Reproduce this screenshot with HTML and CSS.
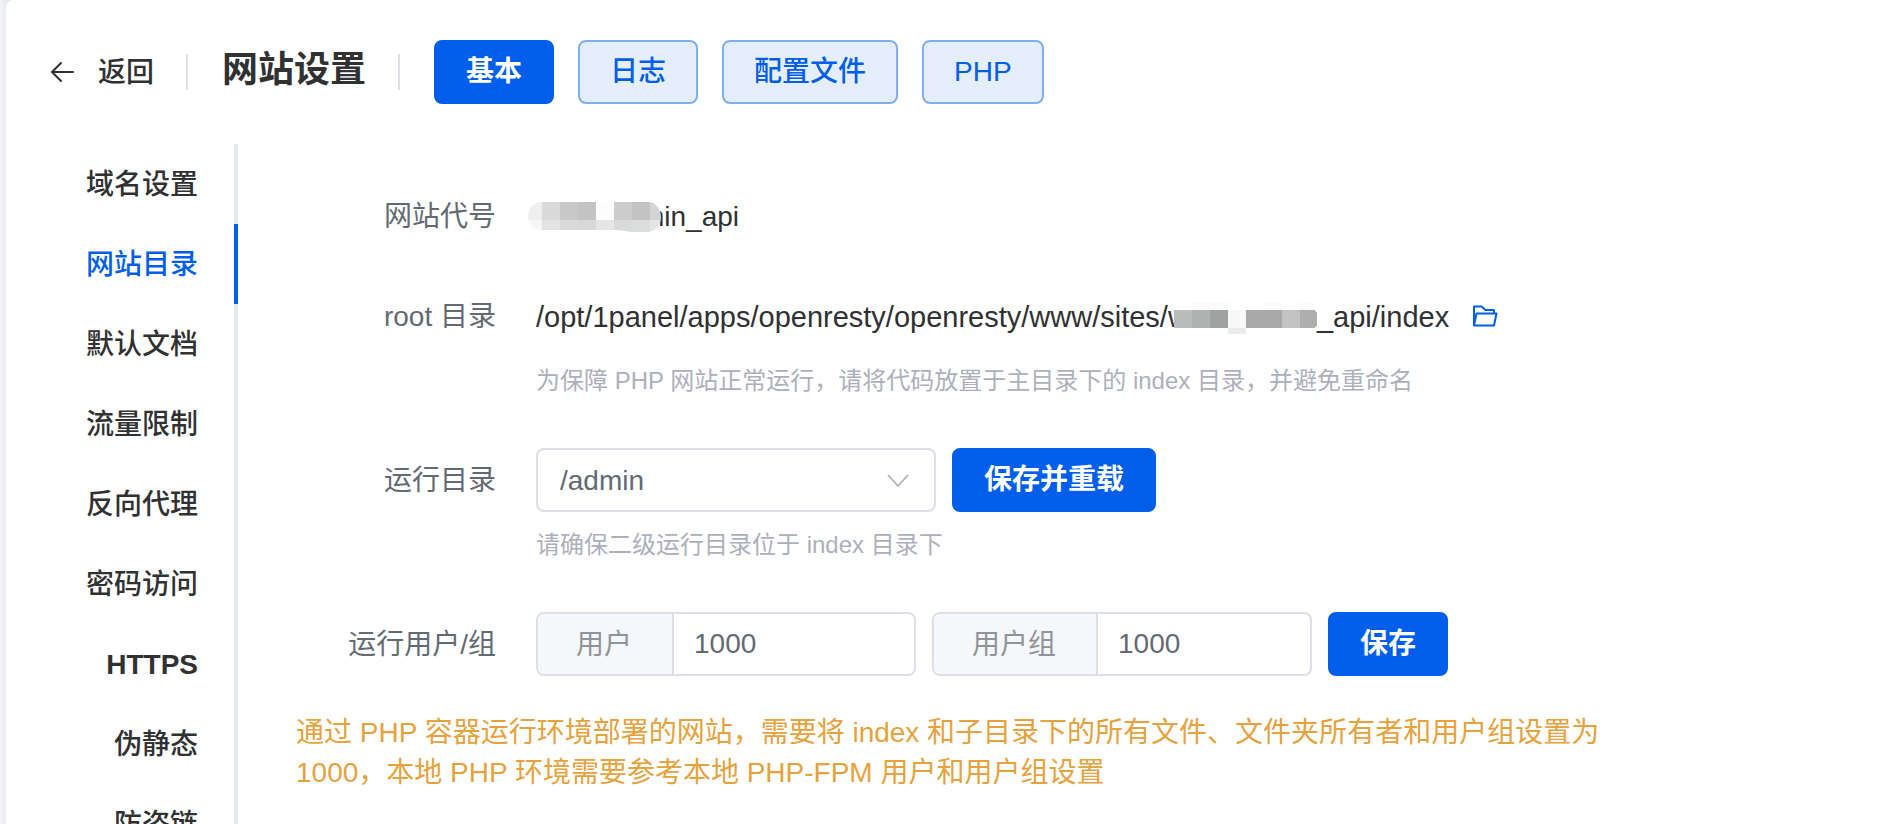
FILE: index.html
```html
<!DOCTYPE html>
<html lang="zh-CN">
<head>
<meta charset="utf-8">
<meta name="viewport" content="width=device-width, initial-scale=1">
<title>网站设置</title>
<link rel="stylesheet" href="styles.css">
</head>
<body>
<div class="card">
  <header class="header">
    <button class="back" type="button">
      <svg class="back-icon" viewBox="0 0 28 28" aria-hidden="true"><path d="M25 14H4M13 5 4 14l9 9"/></svg>
      <span>返回</span>
    </button>
    <span class="divider"></span>
    <h1 class="title">网站设置</h1>
    <span class="divider"></span>
    <nav class="nav">
      <button class="btn btn-primary" type="button">基本</button>
      <button class="btn btn-plain" type="button">日志</button>
      <button class="btn btn-plain" type="button">配置文件</button>
      <button class="btn btn-plain" type="button">PHP</button>
    </nav>
  </header>
  <div class="body">
    <nav class="tabs">
      <a class="tab" href="#domain">域名设置</a>
      <a class="tab tab-active" href="#path">网站目录</a>
      <a class="tab" href="#doc">默认文档</a>
      <a class="tab" href="#limit">流量限制</a>
      <a class="tab" href="#proxy">反向代理</a>
      <a class="tab" href="#auth">密码访问</a>
      <a class="tab tab-latin" href="#https">HTTPS</a>
      <a class="tab" href="#rewrite">伪静态</a>
      <a class="tab" href="#leech">防盗链</a>
    </nav>
    <main class="main">
      <form class="form">
        <div class="row">
          <span class="label">网站代号</span>
          <div class="field">
            <div class="control">
              <span class="value"><span class="masked masked-alias"><svg class="mosaic mosaic-alias" viewBox="0 0 134 30" aria-hidden="true">
                <defs><clipPath id="pill"><path d="M14 0h106a13 15 0 0 1 0 30h-16l-14-2H14a14 14 0 0 1 0-28z"/></clipPath></defs>
                <g clip-path="url(#pill)" shape-rendering="crispEdges">
                  <path fill="#efefef" d="M0 0h14v18H0z"/><path fill="#dadada" d="M14 0h18v18H14z"/><path fill="#c8c8c8" d="M32 0h18v18H32z"/><path fill="#c3c3c3" d="M50 0h18v18H50z"/><path fill="#fdfdfd" d="M68 0h18v18H68z"/><path fill="#cccccc" d="M86 0h18v18H86z"/><path fill="#c3c3c3" d="M104 0h18v18h-18z"/><path fill="#d4d4d4" d="M122 0h12v18h-12z"/>
                  <path fill="#f6f6f6" d="M0 18h14v12H0z"/><path fill="#e2e2e2" d="M14 18h18v12H14z"/><path fill="#d9d9d9" d="M32 18h18v12H32z"/><path fill="#d7d9d8" d="M50 18h18v12H50z"/><path fill="#e5e5e5" d="M68 18h18v12H68z"/><path fill="#d9dbda" d="M86 18h18v12H86z"/><path fill="#dbdddc" d="M104 18h18v12h-18z"/><path fill="#e4e4e4" d="M122 18h12v12h-12z"/>
                </g>
              </svg></span>min_api</span>
            </div>
          </div>
        </div>
        <div class="row">
          <span class="label">root 目录</span>
          <div class="field">
            <div class="control">
              <span class="value value-path">/opt/1panel/apps/openresty/openresty/www/sites/w<span class="masked masked-root"><svg class="mosaic mosaic-root" viewBox="0 0 143 32" aria-hidden="true" shape-rendering="crispEdges">
                <path fill="#fbfbfb" d="M18 0h36v8H18zM90 0h18v8H90zM126 0h12v8h-12z"/>
                <path fill="#b9bcbb" d="M0 8h18v18H0z"/><path fill="#b0b2b1" d="M18 8h18v18H18z"/><path fill="#a0a2a1" d="M36 8h18v18H36z"/><path fill="#f8f8f8" d="M54 8h18v18H54z"/><path fill="#a8a8a8" d="M72 8h36v18H72z"/><path fill="#c3c3c3" d="M108 8h18v18h-18z"/><path fill="#aeaeae" d="M126 8h14l3 3v12l-3 3h-14z"/>
                <path fill="#ebebeb" d="M54 26h18v6H54z"/>
              </svg></span>n_api/index</span>
              <button class="folder" type="button" aria-label="打开目录">
                <svg class="folder-icon" viewBox="0 0 28 28" aria-hidden="true"><path d="M3 23.500V4.500h7.500l4 3.500h8.500v4M3 23.500 5.500 11.500H25.500l-2.500 12z"/></svg>
              </button>
            </div>
            <p class="help">为保障 PHP 网站正常运行，请将代码放置于主目录下的 index 目录，并避免重命名</p>
          </div>
        </div>
        <div class="row">
          <label class="label" for="dir">运行目录</label>
          <div class="field">
            <div class="control">
              <div class="select">
                <select class="select-input" id="dir"><option>/admin</option></select>
                <svg class="select-arrow" viewBox="0 0 28 28" aria-hidden="true"><path stroke-width="1.500" d="M4 9l10 11L24 9"/></svg>
              </div>
              <button class="btn btn-primary" type="button">保存并重载</button>
            </div>
            <p class="help">请确保二级运行目录位于 index 目录下</p>
          </div>
        </div>
        <div class="row">
          <span class="label">运行用户/组</span>
          <div class="field">
            <div class="control">
              <div class="group">
                <label class="prepend" for="user">用户</label>
                <input class="input" id="user" type="text" value="1000">
              </div>
              <div class="group">
                <label class="prepend" for="usergroup">用户组</label>
                <input class="input" id="usergroup" type="text" value="1000">
              </div>
              <button class="btn btn-primary" type="button">保存</button>
            </div>
          </div>
        </div>
        <p class="notice">通过 PHP 容器运行环境部署的网站，需要将 index 和子目录下的所有文件、文件夹所有者和用户组设置为 1000，本地 PHP 环境需要参考本地 PHP-FPM 用户和用户组设置</p>
      </form>
    </main>
  </div>
</div>
</body>
</html>
```

FILE: styles.css
```css
* {
  box-sizing: border-box;
}

body {
  margin: 0;
  padding-left: 6px;
  height: 100vh;
  overflow: hidden;
  background: linear-gradient(to right, #f2f3f5, #e9eaf2 6px);
  color: #303133;
  font-family: "Liberation Sans", "Noto Sans CJK SC", sans-serif;
  font-size: 28px;
  line-height: 40px;
}

button,
input,
select {
  font: inherit;
  color: inherit;
}

h1,
p {
  margin: 0;
}

.card {
  height: 100%;
  overflow: hidden;
  border-top-left-radius: 8px;
  background: #fff;
}

.header {
  display: flex;
  align-items: center;
  height: 144px;
  padding-left: 42px;
}

.back {
  display: flex;
  align-items: center;
  gap: 22px;
  padding: 0;
  border: 0;
  background: none;
  font-weight: 500;
}

.back span {
  padding-top: 2px;
}

.back-icon {
  width: 28px;
  height: 28px;
  fill: none;
  stroke: #303133;
  stroke-width: 2;
  stroke-linecap: round;
}

.divider {
  width: 2px;
  height: 36px;
  margin: 0 34px 0 32px;
  background: #dcdfe6;
}

.title {
  padding-bottom: 4px;
  font-size: 36px;
  font-weight: 700;
}

.nav {
  display: flex;
  gap: 24px;
}

.btn {
  height: 64px;
  padding: 0 30px;
  border: 2px solid #005eeb;
  border-radius: 8px;
  font-weight: 500;
  white-space: nowrap;
}

.btn-primary {
  background: #005eeb;
  color: #fff;
  font-weight: 700;
}

.btn-plain {
  border-color: #80aef5;
  background: #e5eefd;
  color: #005eeb;
}

.body {
  display: flex;
}

.tabs {
  flex: none;
  width: 232px;
}

.tab {
  display: block;
  padding: 2px 36px 0 0;
  border-right: 4px solid #e4e7ed;
  color: #303133;
  font-weight: 500;
  line-height: 78px;
  text-align: right;
  text-decoration: none;
}

.tab-active {
  border-color: #005eeb;
  color: #005eeb;
}

.tab-latin {
  font-weight: 700;
}

.main {
  flex: 1;
  padding: 40px 58px;
}

.form {
  display: flex;
  flex-direction: column;
  gap: 36px;
  max-width: 1340px;
}

.row {
  display: flex;
  gap: 40px;
}

.label {
  flex: none;
  width: 200px;
  padding-top: 2px;
  color: #646a73;
  line-height: 62px;
  text-align: right;
}

.control {
  display: flex;
  align-items: center;
  gap: 16px;
  min-height: 64px;
}

.value {
  padding-top: 2px;
  white-space: nowrap;
}

.value-path {
  font-size: 29px;
}

.masked {
  display: inline-block;
  position: relative;
  height: 28px;
  vertical-align: middle;
}

.masked-alias {
  width: 105px;
}

.masked-root {
  width: 112px;
}

.mosaic {
  position: absolute;
}

.mosaic-alias {
  top: -3px;
  left: -8px;
  width: 134px;
  height: 30px;
}

.mosaic-root {
  top: -3px;
  left: -15px;
  width: 143px;
  height: 32px;
}

.folder {
  display: flex;
  padding: 0;
  margin-left: 6px;
  border: 0;
  background: none;
}

.folder-icon {
  width: 28px;
  height: 28px;
  fill: none;
  stroke: #005eeb;
  stroke-width: 2;
  stroke-linejoin: round;
}

.help {
  padding-top: 2px;
  color: #adb0bc;
  font-size: 24px;
  line-height: 62px;
}

.select {
  position: relative;
  width: 400px;
}

.select-input {
  appearance: none;
  display: block;
  width: 100%;
  height: 64px;
  padding: 2px 60px 0 22px;
  border: 2px solid #dcdfe6;
  border-radius: 8px;
  background: #fff;
  color: #646a73;
}

.select-arrow {
  position: absolute;
  top: 18px;
  right: 24px;
  width: 28px;
  height: 28px;
  fill: none;
  stroke: #a8abb2;
  pointer-events: none;
}

.group {
  display: flex;
  width: 380px;
  height: 64px;
  overflow: hidden;
  border: 2px solid #dcdfe6;
  border-radius: 8px;
}

.prepend {
  flex: none;
  padding: 2px 40px 0 38px;
  border-right: 2px solid #dcdfe6;
  background: #f5f7fa;
  color: #909399;
  line-height: 58px;
}

.input {
  flex: 1;
  min-width: 0;
  padding: 0 20px;
  border: 0;
  background: #fff;
  color: #646a73;
}

.notice {
  padding-top: 1px;
  color: #e6a23c;
}
```
